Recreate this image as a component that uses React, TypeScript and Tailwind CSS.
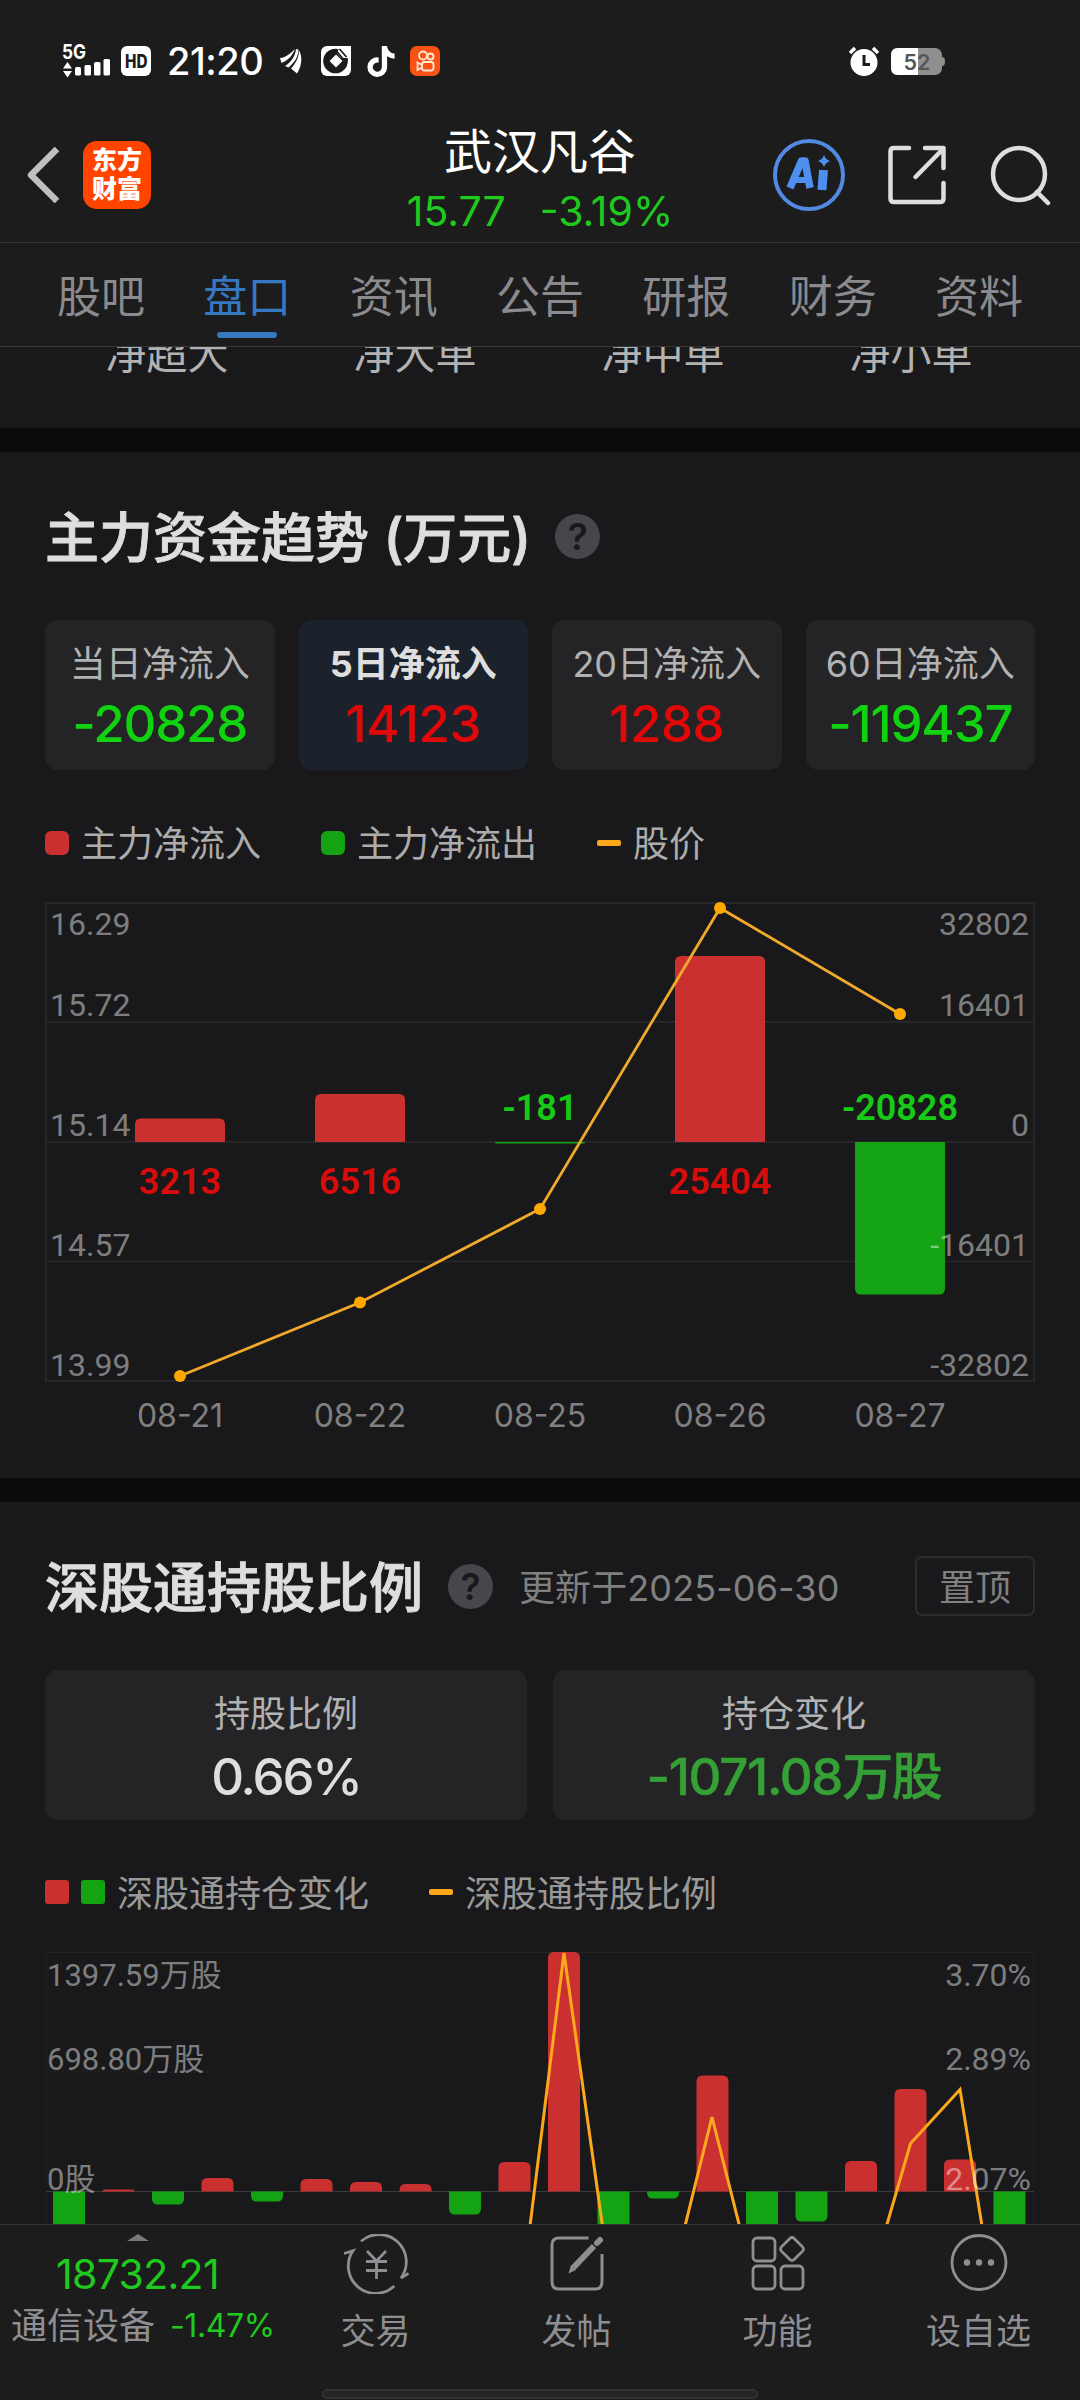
import React from 'react';
import { clsx } from 'clsx';
import { FaTiktok } from 'react-icons/fa6';

const TABS = ['股吧', '盘口', '资讯', '公告', '研报', '财务', '资料'];
const ORDER_SIZES = ['净超大', '净大单', '净中单', '净小单'];

const PERIODS = [
  { label: '当日净流入', value: '-20828' },
  { label: '5日净流入', value: '14123' },
  { label: '20日净流入', value: '1288' },
  { label: '60日净流入', value: '-119437' },
];

// chart coordinates are px from the chart's own top left corner
const FLOW_ROWS = [
  { y: 1, text: 33, left: '16.29', right: '32802' },
  { y: 120, text: 114, left: '15.72', right: '16401' },
  { y: 240, text: 233.5, left: '15.14', right: '0' },
  { y: 359.5, text: 353.5, left: '14.57', right: '-16401' },
  { y: 479, text: 473.5, left: '13.99', right: '-32802' },
];

const FLOW_DAYS = [
  { x: 135, value: 3213, bar: 23.5, price: 474, date: '08-21' },
  { x: 315, value: 6516, bar: 48, price: 400.5, date: '08-22' },
  { x: 495, value: -181, bar: 1.5, price: 307, date: '08-25' },
  { x: 675, value: 25404, bar: 186, price: 6, date: '08-26' },
  { x: 855, value: -20828, bar: 152.5, price: 112, date: '08-27' },
];

const HOLDING_BARS = [-60, 2, -13, 13.5, -10, 12.5, 9.5, 7.5, -23, 29.5, 239.5, -70, -7, 116, -60, -30, 30.5, 102.5, 32, -60];

const HOLDING_ROWS = [
  { y: 36, left: '1397.59万股', right: '3.70%' },
  { y: 120, left: '698.80万股', right: '2.89%' },
  { y: 239.5, left: '0股', right: '2.07%' },
];

// bar from the zero line with only the far corners rounded
function barPath(x: number, zero: number, w: number, h: number, r: number) {
  const s = h > 0 ? -1 : 1;
  const end = zero - h;
  const k = Math.min(r, Math.abs(h));
  return `M${x} ${zero}V${end - s * k}Q${x} ${end} ${x + k} ${end}H${x + w - k}Q${x + w} ${end} ${x + w} ${end - s * k}V${zero}Z`;
}

function StatusBar() {
  return (
    <div className="flex h-[108px] items-center pt-[14px] pl-[62px] text-white">
      <svg width="50" height="34" viewBox="0 0 50 34" fill="currentColor">
        <text x="0" y="15" fontSize="20" fontWeight="700" textLength="24" lengthAdjust="spacingAndGlyphs">5G</text>
        <path d="M1 24.500 5.500 18l4.500 6.500ZM1 27h9l-4.500 6.500Z" />
        <rect x="13" y="23" width="6" height="8.500" rx="1.500" />
        <rect x="22.500" y="21" width="6.500" height="10.500" rx="1.500" />
        <rect x="32" y="18" width="6.500" height="13.500" rx="1.500" />
        <rect x="41.500" y="15" width="6.500" height="16.500" rx="1.500" />
      </svg>
      <svg className="ml-[9px]" width="30" height="30" viewBox="0 0 30 30">
        <rect width="30" height="30" rx="6" fill="#fff" />
        <text x="4" y="22" fontSize="18.500" fontWeight="800" textLength="22.500" lengthAdjust="spacingAndGlyphs" fill="#1c1c1c">HD</text>
      </svg>
      <span className="ml-[16px] w-[96px] text-[38px] leading-none font-medium tracking-[-0.5px]">21:20</span>
      <svg className="ml-[17px]" width="22" height="26" viewBox="0 0 22 26" fill="currentColor">
        <path d="M0 10C6 9.500 11 5 15 1C12.500 8 7 13 1.500 15ZM5 18C11 14 15.500 8 16 1L18.500 1.500C18.500 9 14 15 8.500 19.500ZM11 20.500C16 15 19 9 19 2.500C23 9 21.500 19 17 25.500Z" />
      </svg>
      <svg className="ml-[19px]" width="30" height="30" viewBox="0 0 30 30">
        <rect width="30" height="30" rx="6" fill="#fff" />
        <circle cx="14.500" cy="15" r="12.300" fill="#1c1c1c" />
        <path d="m15 8.500 6.500 6.500-6.500 6.500-6.500-6.500Z" fill="#fff" />
        <path d="M16 7 20 12H30V0H19Z" fill="#fff" />
        <path d="M16 5.500 22.500 13.500H27M18.500 3l7 8" fill="none" stroke="#1c1c1c" strokeWidth="1.700" />
      </svg>
      <FaTiktok className="ml-[16px] h-[31px] w-[28px]" />
      <svg className="ml-[15px]" width="30" height="30" viewBox="0 0 30 30" fill="none" stroke="#ffe9d6" strokeWidth="1.800">
        <rect width="30" height="30" rx="7" fill="#fa5214" stroke="none" />
        <circle cx="13" cy="9.500" r="4" />
        <circle cx="20.500" cy="10.500" r="3" />
        <rect x="12" y="16" width="11.500" height="8.500" rx="2.500" />
        <path d="M12 19 7.500 16.500v7.500l4.500-2.500" />
      </svg>
      <svg className="ml-[409px]" width="30" height="30" viewBox="0 0 30 30">
        <circle cx="15" cy="16.500" r="13.500" fill="#fff" />
        <path d="m1 7 5-5M29 7l-5-5" stroke="#fff" strokeWidth="3.500" />
        <path d="M15 9v9.500h6" fill="none" stroke="#1c1c1c" strokeWidth="3" />
      </svg>
      <svg className="ml-[12px]" width="54" height="27" viewBox="0 0 54 27">
        <rect width="51" height="27" rx="7" fill="#8f8f8f" />
        <path d="M51 9q3 0 3 4.500t-3 4.500Z" fill="#8f8f8f" />
        <path d="M7 0H27V27H7Q0 27 0 20V7Q0 0 7 0Z" fill="#fff" />
        <text x="26" y="21.500" textAnchor="middle" fontSize="21.500" fontWeight="600" fill="#555">52</text>
      </svg>
    </div>
  );
}

function Header() {
  return (
    <div className="grid h-[135px] grid-cols-3 border-b border-[#363636]">
      <div className="flex items-center pl-[26px]">
        <svg width="34" height="56" viewBox="0 0 34 56" fill="none" stroke="#bfbfbf" strokeWidth="6.500">
          <path d="M31 2 5 28l26 26" strokeLinejoin="round" />
        </svg>
        <div className="ml-[23px] flex h-[68px] w-[68px] flex-col items-center justify-center rounded-[14px] bg-[#ff4400] text-[25px] leading-[29px] font-black text-white">
          <span>东方</span>
          <span>财富</span>
        </div>
      </div>
      <div className="flex flex-col items-center pt-[16px]">
        <span className="text-[48px] leading-[56px] text-white">武汉凡谷</span>
        <div className="flex gap-[34px] pt-[9px] text-[41px] leading-[44px] whitespace-nowrap text-[#1fca1f]">
          <span>15.77</span>
          <span>-3.19%</span>
        </div>
      </div>
      <div className="flex items-center justify-end pr-[29px]">
        <svg width="72" height="72" viewBox="0 0 72 72" fill="none" stroke="#5289e2">
          <circle cx="36" cy="36" r="34" strokeWidth="4" />
          <g stroke="#4f8ff0">
            <path d="M17 49 28.500 22H32L37 49" strokeWidth="7.500" strokeLinejoin="round" />
            <path d="M23 41h13" strokeWidth="6" />
            <path d="M50.500 31 49 51" strokeWidth="9" />
          </g>
          <path d="M51 16q1.500 4.500 6 6-4.500 1.500-6 6-1.500-4.500-6-6 4.500-1.500 6-6Z" fill="#4f8ff0" stroke="none" />
        </svg>
        <svg className="ml-[43px]" width="58" height="60" viewBox="0 0 58 60" fill="none" stroke="#dedede" strokeWidth="4.500" strokeLinecap="round" strokeLinejoin="round">
          <path d="M21 3H6Q2.500 3 2.500 6.500V53.500Q2.500 57 6 57H52Q55.500 57 55.500 53.500V38M37 3H55.500V23M54 5 27.500 32" />
        </svg>
        <svg className="ml-[44px]" width="61" height="62" viewBox="0 0 61 62" fill="none" stroke="#dedede" strokeWidth="4.500" strokeLinecap="round">
          <circle cx="29" cy="30" r="26" />
          <path d="M47 48 58 59" />
        </svg>
      </div>
    </div>
  );
}

function HelpIcon() {
  return (
    <span className="flex h-[45px] w-[45px] items-center justify-center rounded-full bg-[#47474b] text-[37px] leading-none font-semibold text-[#19191b]">?</span>
  );
}

interface StatCardProps {
  label: string;
  value: string;
  active?: boolean;
  valueClass: string;
}

function StatCard({ label, value, active, valueClass }: StatCardProps) {
  return (
    <div className={clsx('flex h-[150px] flex-col items-center rounded-[13px] pt-[24px]', active ? 'bg-[#1b222c]' : 'bg-[#242426]')}>
      <span className={clsx('text-[36px] leading-[40px] whitespace-nowrap', active ? 'font-bold text-[#dedede]' : 'text-[#b2b2b2]')}>{label}</span>
      <span className={clsx('text-[51px] leading-[56px] font-medium whitespace-nowrap', valueClass)}>{value}</span>
    </div>
  );
}

function FlowChart() {
  return (
    <svg className="block" width="1080" height="540" viewBox="0 0 1080 540" fontSize="32">
      <g stroke="#262628" strokeWidth="2">
        {FLOW_ROWS.map(r => <path key={r.y} d={`M45 ${r.y}H1035`} />)}
        <path d="M46 1V479M1034 1V479" />
      </g>
      {FLOW_DAYS.map(d => (
        <g key={d.date}>
          <path d={barPath(d.x, 240, 90, d.value > 0 ? d.bar : -d.bar, 6)} fill={d.value > 0 ? '#cb3031' : '#13a313'} />
          <text
            className="font-['Roboto',sans-serif]"
            x={d.x + 45}
            y={d.value > 0 ? 292 : 218}
            textAnchor="middle"
            fontSize="36"
            fontWeight="600"
            fill={d.value > 0 ? '#d90c0c' : '#17ca17'}
          >
            {d.value}
          </text>
          <text x={d.x + 45} y="524.5" textAnchor="middle" fill="#808080">{d.date}</text>
        </g>
      ))}
      <polyline points={FLOW_DAYS.map(d => `${d.x + 45},${d.price}`).join(' ')} fill="none" stroke="#f0a92a" strokeWidth="2.8" />
      {FLOW_DAYS.map(d => <circle key={d.x} cx={d.x + 45} cy={d.price} r="6" fill="#ffa800" />)}
      <g className="font-['Roboto',sans-serif]" fill="#fff" fillOpacity="0.45">
        {FLOW_ROWS.map(r => (
          <React.Fragment key={r.y}>
            <text x="50" y={r.text}>{r.left}</text>
            <text x="1029" y={r.text} textAnchor="end">{r.right}</text>
          </React.Fragment>
        ))}
      </g>
    </svg>
  );
}

function HoldingChart() {
  return (
    <svg className="block" width="1080" height="274" viewBox="0 0 1080 274" fontSize="31">
      <g stroke="#232325" fill="none">
        <path d="M46 274V2.500H1034V274" />
        <path d="M46 122H1034" strokeDasharray="2 2" stroke="#2c2c2e" />
        <path d="M46 241.500H1034" stroke="#3a3a3c" />
      </g>
      {HOLDING_BARS.map((h, i) => (
        <path key={i} d={barPath(53 + i * 49.5, 241.5, 32, h, 6)} fill={h > 0 ? '#cb3031' : '#13a313'} />
      ))}
      <g fill="none" stroke="#fba81c" strokeWidth="3">
        <path d="M530 276 564 3 602.500 276M685 276 712 167 739.500 276M886.500 276 910.500 193.500 960 139.500 982 276" />
      </g>
      <g className="font-['Roboto','Noto_Sans_CJK_SC',sans-serif]" fill="#fff" fillOpacity="0.45">
        {HOLDING_ROWS.map(r => (
          <React.Fragment key={r.y}>
            <text x="47" y={r.y}>{r.left}</text>
            <text x="1031" y={r.y} textAnchor="end" fontSize="32">{r.right}</text>
          </React.Fragment>
        ))}
      </g>
    </svg>
  );
}

function BottomItem({ label, children }: { label: string; children: React.ReactNode }) {
  return (
    <div className="flex w-[201px] flex-col items-center pt-[9px] text-[#8e8e93]">
      <svg width="66" height="60" viewBox="0 0 66 60" fill="none" stroke="currentColor" strokeWidth="2.8">{children}</svg>
      <span className="pt-[17px] text-[35px] leading-[40px]">{label}</span>
    </div>
  );
}

function BottomBar() {
  return (
    <div className="relative flex h-[176px] border-t border-[#363636] bg-[#1c1c1c]">
      <div className="flex w-[275px] flex-col items-center pt-[9px]">
        <svg width="22" height="7" viewBox="0 0 22 7" fill="#79797b"><path d="M0 7 11 0l11 7Z" /></svg>
        <span className="pt-[9px] text-[41px] leading-[48px] tracking-[-0.7px] text-[#1fca1f]">18732.21</span>
        <div className="flex items-center gap-[15px] self-start pt-[8px] pl-[11px] leading-[40px] whitespace-nowrap">
          <span className="text-[36px] text-[#8e8e93]">通信设备</span>
          <span className="text-[32px] tracking-[-0.4px] text-[#1fca1f]">-1.47%</span>
        </div>
      </div>
      <BottomItem label="交易">
        <path d="M18 7.300A27.300 27.300 0 0 1 58 44L65.500 39.500M51.300 52A27.300 27.300 0 0 1 10 16.800L1 19.500" />
        <path d="m24 17 9.500 10 9.500-10M33.500 26.500v18.500M23 27.500h21M23 36.500h21" />
      </BottomItem>
      <BottomItem label="发帖">
        <path d="M44.500 4H15Q8 4 8 11V48Q8 55 15 55H51Q58 55 58 48V20" strokeWidth="3" />
        <path d="M29.500 33.500 50 12" strokeWidth="6" />
        <path d="M27 31 32 36 24.500 39.500Z" fill="currentColor" stroke="none" />
        <path d="M53 9 56 6" strokeWidth="6" strokeLinecap="round" />
      </BottomItem>
      <BottomItem label="功能">
        <rect x="8" y="4" width="22" height="23" rx="4" />
        <rect x="8" y="32" width="22" height="23" rx="4" />
        <rect x="36" y="32" width="22" height="23" rx="4" />
        <rect x="38" y="6" width="18" height="18" rx="3" transform="rotate(45 47 15)" />
      </BottomItem>
      <BottomItem label="设自选">
        <circle cx="33" cy="28.500" r="27" />
        <g fill="currentColor" stroke="none">
          <circle cx="21" cy="28.500" r="3.200" />
          <circle cx="33" cy="28.500" r="3.200" />
          <circle cx="45" cy="28.500" r="3.200" />
        </g>
      </BottomItem>
      <div className="absolute bottom-[1px] left-[322px] h-[10px] w-[436px] rounded-full border-2 border-[#303030] bg-[#252525]" />
    </div>
  );
}

export default function App() {
  return (
    <div className="flex h-[2400px] w-[1080px] flex-col overflow-hidden bg-[#19191b] font-['Inter','Noto_Sans_CJK_SC',sans-serif]">
      <div className="shrink-0 bg-[#1c1c1c]">
        <StatusBar />
        <Header />
        <div className="flex h-[104px] justify-between border-b border-[#363636] px-[28px]">
          {TABS.map(tab => (
            <div key={tab} className={clsx('flex w-[146px] flex-col items-center pt-[29px] text-[44px] leading-[50px]', tab === '盘口' ? 'text-[#3678c2]' : 'text-[#8b8a8f]')}>
              {tab}
              {tab === '盘口' && <span className="mt-[10px] h-[6px] w-[60px] rounded-full bg-[#3678c2]" />}
            </div>
          ))}
        </div>
      </div>

      <div className="flex h-[81px] shrink-0 items-start overflow-hidden px-[43px]">
        {ORDER_SIZES.map(name => (
          <span key={name} className="-mt-[16px] w-[248px] shrink-0 text-center text-[41px] leading-[46px] text-[#b2b2b2]">{name}</span>
        ))}
      </div>

      <section className="h-[1050px] shrink-0 border-t-[24px] border-[#0c0c0c]">
        <div className="flex h-[168px] items-center gap-[24px] px-[45px]">
          <h2 className="pt-[5px] text-[54px] font-medium text-[#dedede] [-webkit-text-stroke:0.9px_#dedede]">主力资金趋势 (万元)</h2>
          <HelpIcon />
        </div>
        <div className="grid grid-cols-4 gap-[24px] px-[45px]">
          {PERIODS.map((p, i) => (
            <StatCard
              key={p.label}
              label={p.label}
              value={p.value}
              active={i === 1}
              valueClass={p.value.startsWith('-') ? 'pt-[12px] tracking-[-1.2px] text-[#10d210]' : 'pt-[12px] tracking-[-0.5px] text-[#e00808]'}
            />
          ))}
        </div>
        <div className="flex h-[132px] items-center px-[45px] pt-[14px] text-[36px] text-[#acacac]">
          <i className="h-[24px] w-[24px] rounded-[6px] bg-[#cb3031]" />
          <span className="ml-[12px] pt-[2px]">主力净流入</span>
          <i className="ml-[60px] h-[24px] w-[24px] rounded-[6px] bg-[#13a313]" />
          <span className="ml-[12px] pt-[2px]">主力净流出</span>
          <i className="ml-[60px] h-[6px] w-[24px] rounded-[2px] bg-[#faa819]" />
          <span className="ml-[12px] pt-[2px]">股价</span>
        </div>
        <FlowChart />
      </section>

      <section className="h-[746px] shrink-0 overflow-hidden border-t-[24px] border-[#0c0c0c]">
        <div className="flex h-[168px] items-center px-[45px]">
          <h2 className="mr-[25px] pt-[5px] text-[54px] font-medium text-[#dedede] [-webkit-text-stroke:0.9px_#dedede]">深股通持股比例</h2>
          <HelpIcon />
          <span className="ml-[26px] pt-[4px] text-[36px] tracking-[0.1px] text-[#808080]">更新于2025-06-30</span>
          <button className="ml-auto h-[60px] w-[120px] rounded-[7px] border-2 border-[#2c2c2e] pt-[3px] text-[36px] leading-[54px] text-[#808080]">置顶</button>
        </div>
        <div className="grid grid-cols-2 gap-[26px] px-[45px]">
          <StatCard label="持股比例" value="0.66%" valueClass="pt-[15px] tracking-[-2.2px] text-[#dedede]" />
          <StatCard label="持仓变化" value="-1071.08万股" valueClass="pt-[15px] tracking-[-1.3px] text-[#35a035] [-webkit-text-stroke:0.5px_#35a035]" />
        </div>
        <div className="flex h-[130px] items-center px-[45px] pt-[14px] text-[36px] text-[#999999]">
          <i className="h-[24px] w-[24px] rounded-[3px] bg-[#cb3031]" />
          <i className="ml-[12px] h-[24px] w-[24px] rounded-[3px] bg-[#13a313]" />
          <span className="ml-[12px] pt-[3px]">深股通持仓变化</span>
          <i className="ml-[60px] h-[6px] w-[24px] rounded-[2px] bg-[#faa819]" />
          <span className="ml-[12px] pt-[3px]">深股通持股比例</span>
        </div>
        <HoldingChart />
      </section>

      <BottomBar />
    </div>
  );
}
